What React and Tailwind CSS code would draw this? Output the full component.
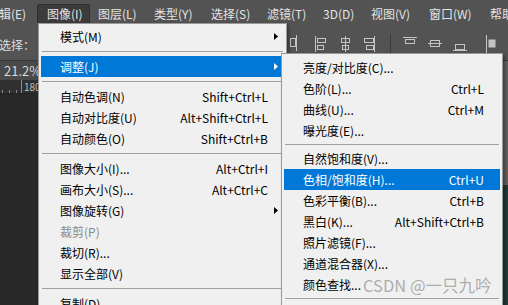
import React from "react"

const menuBar = [
  { label: "辑(E)", w: "w-[38px]", pl: "-ml-[1px]" },
  { label: "图像(I)", w: "w-[53px]", pl: "pl-[9px]", active: true },
  { label: "图层(L)", w: "w-[56px]", pl: "pl-[8px]" },
  { label: "类型(Y)", w: "w-[57px]", pl: "pl-[8px]" },
  { label: "选择(S)", w: "w-[56px]", pl: "pl-[8px]" },
  { label: "滤镜(T)", w: "w-[56px]", pl: "pl-[8px]" },
  { label: "3D(D)", w: "w-[48px]", pl: "pl-[8px]" },
  { label: "视图(V)", w: "w-[58px]", pl: "pl-[8px]" },
  { label: "窗口(W)", w: "w-[61px]", pl: "pl-[8px]" },
  { label: "帮助(H)", w: "w-[60px]", pl: "pl-[8px]" },
]

const imageMenu = [
  { label: "模式(M)", arrow: true },
  { sep: true },
  { label: "调整(J)", arrow: true, active: true },
  { sep: true },
  { label: "自动色调(N)", sc: "Shift+Ctrl+L" },
  { label: "自动对比度(U)", sc: "Alt+Shift+Ctrl+L" },
  { label: "自动颜色(O)", sc: "Shift+Ctrl+B" },
  { sep: true },
  { label: "图像大小(I)...", sc: "Alt+Ctrl+I" },
  { label: "画布大小(S)...", sc: "Alt+Ctrl+C" },
  { label: "图像旋转(G)", arrow: true },
  { label: "裁剪(P)", disabled: true },
  { label: "裁切(R)..." },
  { label: "显示全部(V)" },
  { sep: true },
  { label: "复制(D)..." },
]

const adjustMenu = [
  { label: "亮度/对比度(C)..." },
  { label: "色阶(L)...", sc: "Ctrl+L" },
  { label: "曲线(U)...", sc: "Ctrl+M" },
  { label: "曝光度(E)..." },
  { sep: true },
  { label: "自然饱和度(V)..." },
  { label: "色相/饱和度(H)...", sc: "Ctrl+U", active: true },
  { label: "色彩平衡(B)...", sc: "Ctrl+B" },
  { label: "黑白(K)...", sc: "Alt+Shift+Ctrl+B" },
  { label: "照片滤镜(F)..." },
  { label: "通道混合器(X)..." },
  { label: "颜色查找..." },
  { sep: true },
]

function Arrow({ white }) {
  return (
    <svg width="4" height="7" viewBox="0 0 4 7">
      <polygon points="0,0 4,3.5 0,7" fill={white ? "#ffffff" : "#000000"} />
    </svg>
  )
}

function MenuList({ items, sepH }) {
  return items.map((it, i) =>
    it.sep ? (
      <div key={i} className={`${sepH} flex items-center mx-[3px]`}>
        <div className="w-full border-t border-[#a0a0a0]" />
      </div>
    ) : (
      <div
        key={i}
        className={`h-[21px] mx-[2px] pl-[19px] flex items-center ${
          it.active ? "bg-[#0078d7] text-white" : it.disabled ? "text-[#8a8a8a]" : "text-black"
        }`}
      >
        <span className="flex-1 whitespace-nowrap">{it.label}</span>
        {it.sc && <span className="whitespace-nowrap">{it.sc}</span>}
        <span className="w-[16px] flex items-center pl-[6px]">
          {it.arrow && <Arrow white={it.active} />}
        </span>
      </div>
    )
  )
}

function AlignIcons() {
  const s = "#c4c4c4"
  return (
    <svg width="220" height="24" viewBox="0 0 220 24" fill="none" stroke={s} strokeWidth="1">
      <rect x="7.5" y="7.5" width="5" height="8" />
      <line x1="13.5" y1="4" x2="13.5" y2="20" />
      <line x1="32.5" y1="5" x2="32.5" y2="21" />
      <rect x="34.5" y="7.5" width="8" height="4" />
      <rect x="34.5" y="14.5" width="6" height="4" />
      <line x1="62.5" y1="5" x2="62.5" y2="21" />
      <rect x="58.5" y="7.5" width="8" height="4" />
      <rect x="59.5" y="14.5" width="6" height="4" />
      <line x1="91.5" y1="5" x2="91.5" y2="21" />
      <rect x="81.5" y="7.5" width="9" height="4" />
      <rect x="83.5" y="14.5" width="7" height="4" />
      <line x1="107.5" y1="3" x2="107.5" y2="23" stroke="#3a3a3a" />
      <line x1="120" y1="6.5" x2="134" y2="6.5" />
      <rect x="122.5" y="8.5" width="9" height="4" />
      <line x1="145" y1="12.5" x2="159" y2="12.5" />
      <rect x="147.5" y="9.5" width="9" height="6" />
      <line x1="170" y1="19.5" x2="184" y2="19.5" />
      <rect x="172.5" y="13.5" width="9" height="5" />
      <line x1="203.5" y1="4" x2="203.5" y2="22" />
      <rect x="206" y="9" width="6" height="7" fill={s} />
    </svg>
  )
}

export default function App() {
  return (
    <div
      className="relative w-[508px] h-[305px] overflow-hidden bg-[#282828] text-[12px] flex flex-col"
      style={{ fontFamily: '"Noto Sans CJK SC", "Noto Sans", sans-serif' }}
    >
      {/* menu bar */}
      <div className="h-[23px] bg-[#535353] flex items-end text-[#e4e4e4] shrink-0">
        {menuBar.map((m) => (
          <div
            key={m.label}
            className={`${m.w} shrink-0 h-[19px] flex items-center whitespace-nowrap ${m.pl} ${
              m.active ? "bg-[#3c3c3c] border border-b-0 border-[#2f2f2f] rounded-t-[3px]" : ""
            }`}
          >
            {m.label}
          </div>
        ))}
      </div>

      {/* options bar */}
      <div className="h-[38px] bg-[#535353] flex items-center shrink-0 border-b border-[#383838]">
        <span className="text-[#dedede] pt-[6px] -ml-[1px]">选择：</span>
        <div className="ml-auto mr-[5px] pt-[2px]">
          <AlignIcons />
        </div>
      </div>

      {/* work area */}
      <div className="flex-1 flex">
        <div className="flex-1 flex flex-col">
          <div className="h-[19px] bg-[#4a4a4a] flex items-center pl-[4px] text-[#d8d8d8] text-[13px] leading-none">21.2%</div>
          <div className="h-[14px] bg-[#303030] border-b border-[#222] flex items-end text-[#bdbdbd] text-[10px] leading-none">
            <span className="w-[1px] h-[3px] bg-[#8a8a8a] ml-[2px]" />
            <span className="w-[1px] h-[3px] bg-[#8a8a8a] ml-[6px]" />
            <span className="w-[1px] h-[3px] bg-[#8a8a8a] ml-[6px]" />
            <span className="w-[1px] h-full bg-[#8a8a8a] ml-[4px]" />
            <span className="ml-[2px] self-start pt-[2px]">180</span>
          </div>
          <div className="flex-1 bg-[#282828]" />
        </div>
        <div className="w-[6px] flex flex-col">
          <div className="h-[124px] bg-[#5f5f5f]" />
          <div className="flex-1 bg-[#1e3a39]" />
        </div>
      </div>

      {/* 图像 menu */}
      <div className="absolute left-[38px] top-[23px] w-[249px] h-[300px] bg-[#f0f0f0] border border-[#999] pt-[2px] shadow-[2px_2px_3px_rgba(0,0,0,0.35)]">
        <MenuList items={imageMenu} sepH="h-[9px]" />
      </div>

      {/* 调整 submenu */}
      <div className="absolute left-[281px] top-[53px] w-[222px] h-[280px] bg-[#f0f0f0] border border-[#999] pt-[3px] shadow-[2px_2px_3px_rgba(0,0,0,0.35)]">
        <MenuList items={adjustMenu} sepH="h-[7px]" />
      </div>

      {/* watermark */}
      <div className="absolute left-[363px] top-[274px] text-[16.5px] leading-[22px] text-[#9a9a9a]/80 whitespace-nowrap">
        CSDN @一只九吟
      </div>
    </div>
  )
}
